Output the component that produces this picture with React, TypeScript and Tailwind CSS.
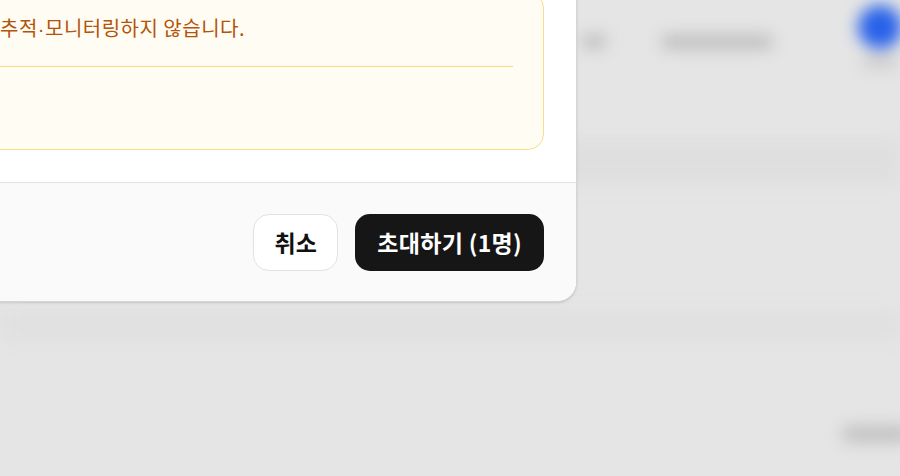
import React from 'react';

const font = "font-['Noto_Sans_CJK_KR','Noto_Sans',sans-serif]";

const BlurredPage: React.FC = () => (
    <div className="absolute inset-0 blur-[8px]">
        {/* Header row */}
        <div className="flex h-[90px] items-start">
            <div className="w-[582px] shrink-0" />
            <div className="mt-[35px] h-[13px] w-[24px] shrink-0 rounded bg-[#bcbcbc]" />
            <div className="ml-[56px] mt-[35px] h-[14px] w-[110px] shrink-0 rounded bg-[#bdbdbd]" />
            <div className="ml-[86px] flex shrink-0 flex-col items-center">
                <div className="mt-[5px] h-[44px] w-[44px] rounded-full bg-[#2862ea]" />
                <div className="mt-[8px] h-[10px] w-[34px] rounded bg-[#c6c6c6]" />
            </div>
        </div>
        {/* Sub bar */}
        <div className="mt-[48px] h-[46px] bg-[#dfdfdf]" />
        <div className="mt-[128px] h-[28px] bg-[#dfe0df]" />
        {/* Bottom right pill */}
        <div className="mt-[86px] flex justify-end">
            <div className="mr-[-12px] h-[16px] w-[70px] rounded-full bg-[#c0c0c0]" />
        </div>
    </div>
);

export default function App() {
    return (
        <div className={`relative h-[476px] w-[900px] overflow-hidden bg-[#e5e5e5] ${font}`}>
            <BlurredPage />

            {/* Modal (scrolled so only its lower right part shows) */}
            <div className="absolute bottom-[174px] left-[-64px] w-[641px] overflow-hidden rounded-b-[20px] border border-[#d5d5d5] bg-white shadow-sm">
                <div className="px-8 pb-8 pt-[60px]">
                    <div className="rounded-2xl border border-[#f8de8c] bg-[#fffcf3] px-[30px] pt-5">
                        <p className="text-[20px] leading-[30px] tracking-[0.5px] text-[#b45309]">
                            추적<span className="font-['Liberation_Sans',sans-serif]">·</span>모니터링하지 않습니다.
                        </p>
                        <div className="mt-[22px] h-px bg-[#f8da84]" />
                        <div className="h-[82px]" />
                    </div>
                </div>

                {/* Footer */}
                <div className="flex h-[119px] items-center justify-end gap-[17px] border-t border-[#e3e3e3] bg-[#fafafa] px-8">
                    <button className="h-[57px] rounded-2xl border border-[#e2e2e2] bg-white px-5 text-[23px] font-semibold tracking-[0.3px] text-[#111]">
                        취소
                    </button>
                    <button className="h-[57px] rounded-[15px] bg-[#161616] px-[22px] text-[23px] font-semibold tracking-[0.3px] text-white">
                        초대하기 (1명)
                    </button>
                </div>
            </div>
        </div>
    );
}
